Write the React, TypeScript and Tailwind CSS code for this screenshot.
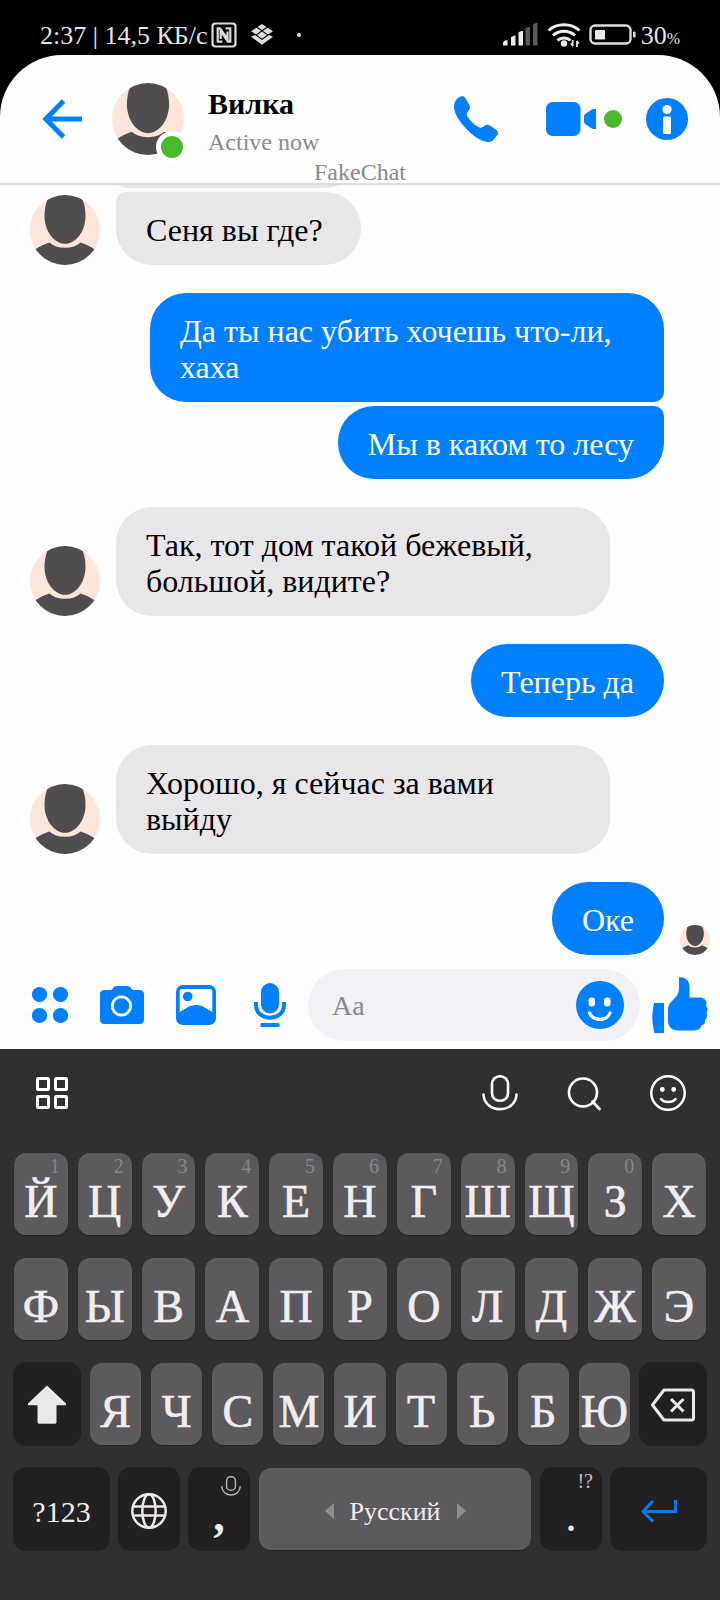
import { useId, type ReactNode } from "react";

type Message = {
  text: string;
  from: "me" | "them";
  joined?: "above" | "below";
  seen?: boolean;
};

const messages: Message[] = [
  { from: "them", text: "Сеня вы где?", joined: "above" },
  { from: "me", text: "Да ты нас убить хочешь что-ли, хаха", joined: "below" },
  { from: "me", text: "Мы в каком то лесу", joined: "above" },
  { from: "them", text: "Так, тот дом такой бежевый, большой, видите?" },
  { from: "me", text: "Теперь да" },
  { from: "them", text: "Хорошо, я сейчас за вами выйду" },
  { from: "me", text: "Оке", seen: true },
];

const topRow = "ЙЦУКЕНГШЩЗХ".split("");
const middleRow = "ФЫВАПРОЛДЖЭ".split("");
const bottomRow = "ЯЧСМИТЬБЮ".split("");
const hints = "1234567890".split("");

function Avatar({ className }: { className: string }) {
  const id = useId();
  return (
    <svg viewBox="0 0 70 70" className={className} aria-hidden="true">
      <clipPath id={id}>
        <circle cx="35" cy="35" r="35" />
      </clipPath>
      <g clipPath={`url(#${id})`}>
        <rect width="70" height="70" fill="#fee5da" />
        <path d="M21 0h28c4.500 3 6.500 13 6.500 21C55.500 36 46 48.800 35 48.800S14.500 36 14.500 21C14.500 13 16.500 3 21 0Z" fill="#4f4d50" />
        <path d="M5 54.500C10 51 15 49 19.500 47.500c3.500 3.500 9 5.200 15.500 5.200s12-1.700 15.500-5.200C55 49 60 51 65 54.500V70H5Z" fill="#4f4d50" />
      </g>
    </svg>
  );
}

function StatusBar() {
  return (
    <div className="flex h-[55px] items-center justify-between pt-[15px] pr-10 pl-10 text-[26px] text-[#e6e4e6]">
      <div className="flex items-center">
        <span className="whitespace-nowrap">2:37 | 14,5 КБ/с</span>
        <svg width="26" height="26" viewBox="0 0 26 26" fill="none" stroke="#dedcde" className="ml-1" aria-hidden="true">
          <rect x="1.500" y="1.500" width="23" height="23" rx="3" strokeWidth="2.200" />
          <path d="M11.500 19.700H6.700V6.300H9L16.500 17V9.500" strokeWidth="2.200" />
          <path d="M14.500 6.300h4.800v13.400H17L9.700 9v8" strokeWidth="2.200" />
        </svg>
        <svg width="22" height="22" viewBox="0 0 22 22" fill="#dedcde" className="ml-3.5" aria-hidden="true">
          <path d="m11 0 4.500 3-4.500 3-4.500-3ZM5.500 3.800l4.700 3-5.200 3.700-5-3.300ZM16.500 3.800l5.500 3.400-5 3.300-5.200-3.700ZM11 7.600l5 3.500-5 3.700-5-3.700ZM0 12.800l4-1.800 7 5 7-5 4 1.800-11 8Z" />
        </svg>
        <span className="ml-6 h-1 w-1 rounded-full bg-[#dedcde]" />
      </div>
      <div className="flex items-center">
        <svg width="36" height="24" viewBox="0 0 36 24" fill="#eceaec" aria-hidden="true">
          <path d="M0 22.500V20c0-1.500 2-3 4.500-3v5.500ZM8 22.500v-7.800c0-.8 3-2.200 4.500-2.200v10ZM15.500 22.500V9.500c0-.8 3-1.500 4.500-1.500v14.500Z" />
          <path d="M22.500 22.500V5.500c0-.8 3-1.500 4.500-1.500v18.500ZM30 22.500V1.500C30 .7 33 0 34.500 0v22.500Z" fill="#5b595b" />
        </svg>
        <svg width="34" height="28" viewBox="0 0 34 28" fill="none" stroke="#eceaec" strokeWidth="3" className="ml-2" aria-hidden="true">
          <path d="M1.500 9.500C10 1.800 24 1.800 32.500 9.500M6 14.500c6-5.600 16-5.600 22 0M10.500 19.500c3.600-3.400 9.400-3.400 13 0" />
          <circle cx="17" cy="22.500" r="3.200" fill="#eceaec" stroke="none" />
          <path d="M25.700 19v6M30 20v6" strokeWidth="1.800" />
          <path d="m23 22.500 2.700 3.500v-4ZM32.800 22.500 30 19v4Z" fill="#eceaec" stroke="none" />
        </svg>
        <svg width="48" height="22" viewBox="0 0 48 22" fill="none" className="ml-2" aria-hidden="true">
          <rect x="1.500" y="1.500" width="40" height="18" rx="4.500" stroke="#dedcde" strokeWidth="2.400" />
          <rect x="6" y="6" width="10" height="9.500" rx="1" fill="#eceaec" />
          <rect x="44" y="7.500" width="2.600" height="6" rx="1" fill="#dedcde" />
        </svg>
        <span className="ml-1">
          30<span className="text-[16px]">%</span>
        </span>
      </div>
    </div>
  );
}

function Header() {
  return (
    <header className="border-b-2 border-[#dfdde0]">
      <div className="flex h-[106px] items-center pt-[22px] pr-8 pl-[42px]">
        <button type="button" aria-label="Back">
          <svg width="40" height="40" viewBox="0 0 40 40" fill="none" stroke="#0080ff" strokeWidth="5">
            <path d="M40 20H4M21.500 2 3.800 20l17.700 18" />
          </svg>
        </button>
        <div className="relative ml-[30px] shrink-0">
          <Avatar className="h-[72px] w-[72px]" />
          <span className="absolute -right-1 -bottom-2 h-8 w-8 rounded-full border-[5px] border-white bg-[#49b82b]" />
        </div>
        <div className="ml-6 flex-1 pt-2 whitespace-nowrap">
          <h1 className="text-[30px] leading-[38px] font-bold">Вилка</h1>
          <p className="text-[24px] leading-[38px] text-[#8a898c]">Active now</p>
        </div>
        <button type="button" aria-label="Call">
          <svg width="44" height="46" viewBox="0 0 44 46" fill="#0080ff">
            <path d="M5 1.200C7 0 9.500 0 11 1.600l4 6.600c1.500 2.600 1 4.800-.5 6.600-1.600 1.800-2.200 3-1.300 5.200 2.500 4.500 6.500 8.500 11 11 2.400 1.200 4 .8 5.800-.7 1.800-1.500 3.600-2 6-.7l6 4.200c2 1.400 2.300 3.200 1.400 5L40 43.300c-1.300 2-3 2.700-5.500 2.700-5.500 0-13-4-20.500-11.500C5.500 26 0 17.500 0 10.500 0 6 2 3 5 1.200Z" />
          </svg>
        </button>
        <button type="button" aria-label="Video call" className="ml-12 flex items-center gap-2">
          <svg width="50" height="34" viewBox="0 0 50 34" fill="#0080ff">
            <rect width="34.500" height="34" rx="6.500" />
            <path d="M38 14c0-.8.500-1.500 1.200-2L45 8c1-.7 2-1 3-1h2v20h-2c-1 0-2-.3-3-1l-5.800-4c-.7-.5-1.200-1.200-1.200-2Z" />
          </svg>
          <span className="h-[18px] w-[18px] rounded-full bg-[#49b82b]" />
        </button>
        <button type="button" aria-label="Details" className="ml-6">
          <svg width="42" height="42" viewBox="0 0 42 42">
            <circle cx="21" cy="21" r="21" fill="#0080ff" />
            <circle cx="21" cy="11.500" r="4.600" fill="#fff" />
            <rect x="17" y="18.500" width="8" height="17.500" rx="1.500" fill="#fff" />
          </svg>
        </button>
      </div>
      <p className="text-center text-[24px] leading-[22px] text-[#8a898c]">FakeChat</p>
    </header>
  );
}

function Bubble({ message }: { message: Message }) {
  const mine = message.from === "me";
  const tone = mine ? "bg-[#0080ff] pr-[30px] text-white" : "bg-[#e8e6e9] pr-[38px] text-black";
  let corner = "";
  if (message.joined === "above") corner = mine ? "rounded-tr-[10px]" : "rounded-tl-[10px]";
  if (message.joined === "below") corner = mine ? "rounded-br-[10px]" : "rounded-bl-[10px]";
  return (
    <p className={`rounded-[36px] pt-5 pb-[17px] pl-[30px] text-[32px] leading-[36px] ${tone} ${corner}`}>
      {message.text}
    </p>
  );
}

function Conversation() {
  return (
    <main>
      <div className="flex h-[3px] items-end overflow-hidden pl-[116px]">
        <div className="h-[73px] w-[245px] shrink-0 rounded-[36px] rounded-bl-[10px] bg-[#e8e6e9]" />
      </div>
      <ul>
        {messages.map((m, i) => {
          const tight = i === 0 || (m.from === "me" && m.joined === "above");
          const space = tight ? "mt-1" : "mt-7";
          return m.from === "them" ? (
            <li key={i} className={`flex items-end gap-4 pr-[110px] pl-[30px] ${space}`}>
              <Avatar className="h-[70px] w-[70px] shrink-0" />
              <Bubble message={m} />
            </li>
          ) : (
            <li key={i} className={`flex items-end justify-end pr-2.5 pl-[150px] ${space}`}>
              <Bubble message={m} />
              <span className="flex w-[46px] shrink-0 justify-end">
                {m.seen && <Avatar className="h-[30px] w-[30px]" />}
              </span>
            </li>
          );
        })}
      </ul>
    </main>
  );
}

function Composer() {
  return (
    <form className="flex items-center pt-3.5 pr-3 pb-2 pl-[26px]" onSubmit={(e) => e.preventDefault()}>
      <div className="flex items-center gap-[30px]">
        <button type="button" aria-label="Apps">
          <svg width="44" height="44" viewBox="0 0 44 44" fill="#0080ff">
            <circle cx="13.500" cy="11.500" r="7.600" />
            <circle cx="34.500" cy="11.500" r="7.600" />
            <circle cx="13.500" cy="32.500" r="7.600" />
            <circle cx="34.500" cy="32.500" r="7.600" />
          </svg>
        </button>
        <button type="button" aria-label="Camera">
          <svg width="44" height="44" viewBox="0 0 44 44" fill="#0080ff">
            <path d="M4.500 7H11c1.500 0 2.500-4 5-4h12c2.500 0 3.500 4 5 4h6.500C42.500 7 44 8.500 44 11.500v25c0 3-1.500 4.500-4.500 4.500h-35C1.500 41 0 39.500 0 36.500v-25C0 8.500 1.500 7 4.500 7Z" />
            <circle cx="21.500" cy="23" r="9.200" fill="none" stroke="#fff" strokeWidth="2.800" />
          </svg>
        </button>
        <button type="button" aria-label="Photo">
          <svg width="44" height="44" viewBox="0 0 44 44">
            <rect x="2" y="2" width="40" height="40" rx="7" fill="#0080ff" />
            <path d="M8.500 6h27c2 0 2.800.8 2.800 2.500V29L29 23.500c-5-2-9-2-14 0L5.700 29V8.500C5.700 6.800 6.500 6 8.500 6Z" fill="#fff" />
            <circle cx="13.700" cy="13.500" r="4.800" fill="#0080ff" />
          </svg>
        </button>
        <button type="button" aria-label="Record voice">
          <svg width="44" height="44" viewBox="0 0 44 44" fill="#0080ff">
            <rect x="13" y="0" width="18" height="30.500" rx="9" />
            <path d="M8 19v3c0 17 28 17 28 0v-3" fill="none" stroke="#0080ff" strokeWidth="4" />
            <rect x="12.500" y="40" width="19" height="4" rx="1" />
          </svg>
        </button>
      </div>
      <div className="ml-4 flex h-[72px] min-w-0 flex-1 items-center rounded-full bg-[#f2f1f6] pr-4 pl-6">
        <input
          type="text"
          aria-label="Message"
          placeholder="Aa"
          className="min-w-0 flex-1 bg-transparent pt-0.5 text-[28px] outline-none placeholder:text-[#8a898c]"
        />
        <button type="button" aria-label="Emoji">
          <svg width="48" height="48" viewBox="0 0 48 48">
            <circle cx="24" cy="24" r="24" fill="#0080ff" />
            <rect x="12.500" y="16.500" width="6.500" height="9" rx="3" fill="#fff" />
            <rect x="28" y="16.500" width="6.500" height="9" rx="3" fill="#fff" />
            <path d="M13.500 32c4 8.500 17 8.500 20.500 0" fill="none" stroke="#fff" strokeWidth="3.200" strokeLinecap="round" />
          </svg>
        </button>
      </div>
      <button type="button" aria-label="Send like" className="ml-3">
        <svg width="56" height="56" viewBox="0 0 56 56" fill="#0080ff">
          <path d="M2 26h10v30H2.500C-.3 46-.3 36 2 26Z" />
          <path d="M27 .5C30-.5 34 1 36 4c2 3.500 1.500 9 1.500 16.500H47c4 0 7.500 2 7.500 5.500 0 1.500-.5 2.500-.5 3 2 2 2 4.500.5 7 1 3 .5 5-1.500 7.500.5 3-1 4-3.500 5-1 4-4.500 5-8.500 5H26c-6.500 0-10-4-10-10V33c0-4.500 1.500-7 5-10 5-4.500 6-8 6-13Z" />
        </svg>
      </button>
    </form>
  );
}

function MicOutline({ className, stroke }: { className: string; stroke: string }) {
  return (
    <svg viewBox="0 0 36 36" fill="none" stroke={stroke} strokeWidth="2.600" className={className} aria-hidden="true">
      <rect x="10" y="1.300" width="16" height="24.500" rx="7.500" />
      <path d="M1.500 19.500c1 19.500 32 19.500 33 0" strokeLinecap="round" />
    </svg>
  );
}

function LetterKey({ letter, hint }: { letter: string; hint?: string }) {
  return (
    <button
      type="button"
      className="relative flex h-[82px] min-w-0 flex-1 justify-center rounded-xl bg-[#5c5a5d] pt-[23px] text-[46px] leading-[52px] text-[#f0edf1] shadow-[0_1px_1px_#262427] [-webkit-text-stroke:0.6px_#f0edf1]"
    >
      {letter}
      {hint && (
        <span className="absolute top-px right-2 text-[20px] leading-6 text-[#878588] [-webkit-text-stroke:0]">
          {hint}
        </span>
      )}
    </button>
  );
}

function DarkKey({ label, className, children }: { label: string; className: string; children: ReactNode }) {
  return (
    <button
      type="button"
      aria-label={label}
      className={`relative flex h-[82px] shrink-0 items-center justify-center rounded-xl bg-[#222023] text-[#f0edf1] ring-1 ring-[#222023] ${className}`}
    >
      {children}
    </button>
  );
}

function Keyboard() {
  return (
    <section aria-label="Keyboard" className="grow bg-[#322f32] pb-12">
      <div className="flex h-[104px] items-center justify-between pr-[34px] pb-4 pl-9">
        <button type="button" aria-label="Keyboard menu">
          <svg width="32" height="32" viewBox="0 0 32 32" fill="none" stroke="#fff" strokeWidth="3">
            <rect x="1.500" y="1.500" width="11" height="11" rx=".8" />
            <rect x="19.500" y="1.500" width="11" height="11" rx=".8" />
            <rect x="1.500" y="19.500" width="11" height="11" rx=".8" />
            <rect x="19.500" y="19.500" width="11" height="11" rx=".8" />
          </svg>
        </button>
        <div className="flex items-center gap-12">
          <button type="button" aria-label="Voice input">
            <MicOutline className="h-9 w-9" stroke="#fff" />
          </button>
          <button type="button" aria-label="Search">
            <svg width="36" height="36" viewBox="0 0 36 36" fill="none" stroke="#fff" strokeWidth="2.600">
              <circle cx="17" cy="17.500" r="14" />
              <path d="m26.500 26.500 7 7.500" strokeLinecap="round" />
            </svg>
          </button>
          <button type="button" aria-label="Emoji keyboard">
            <svg width="36" height="36" viewBox="0 0 36 36" fill="none" stroke="#fff" strokeWidth="2.500">
              <circle cx="18" cy="18" r="16.700" />
              <circle cx="12.300" cy="14.500" r="2.400" fill="#fff" stroke="none" />
              <circle cx="23.700" cy="14.500" r="2.400" fill="#fff" stroke="none" />
              <path d="M11 24c3 4 11.500 4 14.500 0" strokeLinecap="round" />
            </svg>
          </button>
        </div>
      </div>
      <div className="flex flex-col gap-[23px] px-3.5">
        <div className="flex gap-2.5">
          {topRow.map((k, i) => (
            <LetterKey key={k} letter={k} hint={hints[i]} />
          ))}
        </div>
        <div className="flex gap-2.5">
          {middleRow.map((k) => (
            <LetterKey key={k} letter={k} />
          ))}
        </div>
        <div className="flex gap-2.5">
          <DarkKey label="Shift" className="w-[66px]">
            <svg width="38" height="40" viewBox="0 0 38 40" fill="#ebe8ec" className="mt-0.5">
              <path d="M19 .5 38 18.500v1.800h-9.500V37c0 1-.7 1.800-1.800 1.800H11.300c-1 0-1.800-.8-1.800-1.800V20.300H0v-1.800Z" />
            </svg>
          </DarkKey>
          {bottomRow.map((k) => (
            <LetterKey key={k} letter={k} />
          ))}
          <DarkKey label="Backspace" className="w-[66px]">
            <svg width="44" height="34" viewBox="0 0 44 34" fill="none" stroke="#ebe8ec" strokeWidth="3" strokeLinejoin="round" className="mt-0.5">
              <path d="M13 2h27.500c1.200 0 2 .8 2 2v26c0 1.200-.8 2-2 2H13L1.500 17Z" />
              <path d="m20 11 12.500 12.500M32.500 11 20 23.500" strokeWidth="3" />
            </svg>
          </DarkKey>
        </div>
        <div className="flex gap-2.5">
          <DarkKey label="Symbols" className="w-[95px] pt-1 text-[30px]">
            ?123
          </DarkKey>
          <DarkKey label="Change language" className="w-[60px]">
            <svg width="36" height="36" viewBox="0 0 36 36" fill="none" stroke="#ebe8ec" strokeWidth="2.500" className="mt-1">
              <circle cx="18" cy="18" r="16.700" />
              <ellipse cx="18" cy="18" rx="6.700" ry="16.700" />
              <path d="M2 13.500h32M2 22.500h32" />
            </svg>
          </DarkKey>
          <DarkKey label="Comma" className="w-[60px] pt-3 text-[46px] font-bold">
            <MicOutline className="absolute top-2 right-2 h-5 w-5" stroke="#b5b3b6" />
            ,
          </DarkKey>
          <button
            type="button"
            className="flex h-[82px] min-w-0 flex-1 items-center justify-center gap-4 rounded-xl bg-[#5c5a5d] pt-1 text-[26px] text-[#f0edf1] shadow-[0_1px_1px_#262427]"
          >
            <svg width="9" height="16" viewBox="0 0 9 16" fill="#8f8d90" aria-hidden="true">
              <path d="M9 0v16L0 8Z" />
            </svg>
            Русский
            <svg width="9" height="16" viewBox="0 0 9 16" fill="#8f8d90" aria-hidden="true">
              <path d="M0 0v16l9-8Z" />
            </svg>
          </button>
          <DarkKey label="Period" className="w-[60px] pt-3 text-[46px]">
            <span className="absolute top-px right-2 text-[20px] leading-6 text-[#c5c3c6]">!?</span>
            .
          </DarkKey>
          <DarkKey label="Enter" className="w-[95px]">
            <svg width="36" height="22" viewBox="0 0 36 22" fill="none" stroke="#0b79ee" strokeWidth="3" className="mt-1">
              <path d="M34.500 0v11.500H2.500M12 1 2 11.500 12 21.500" />
            </svg>
          </DarkKey>
        </div>
      </div>
    </section>
  );
}

export default function App() {
  return (
    <div className="flex min-h-screen flex-col bg-black font-['Liberation_Serif',serif] text-black">
      <StatusBar />
      <div className="flex grow flex-col overflow-hidden rounded-t-[62px] bg-[#fefdfe]">
        <Header />
        <Conversation />
        <Composer />
        <Keyboard />
      </div>
    </div>
  );
}
